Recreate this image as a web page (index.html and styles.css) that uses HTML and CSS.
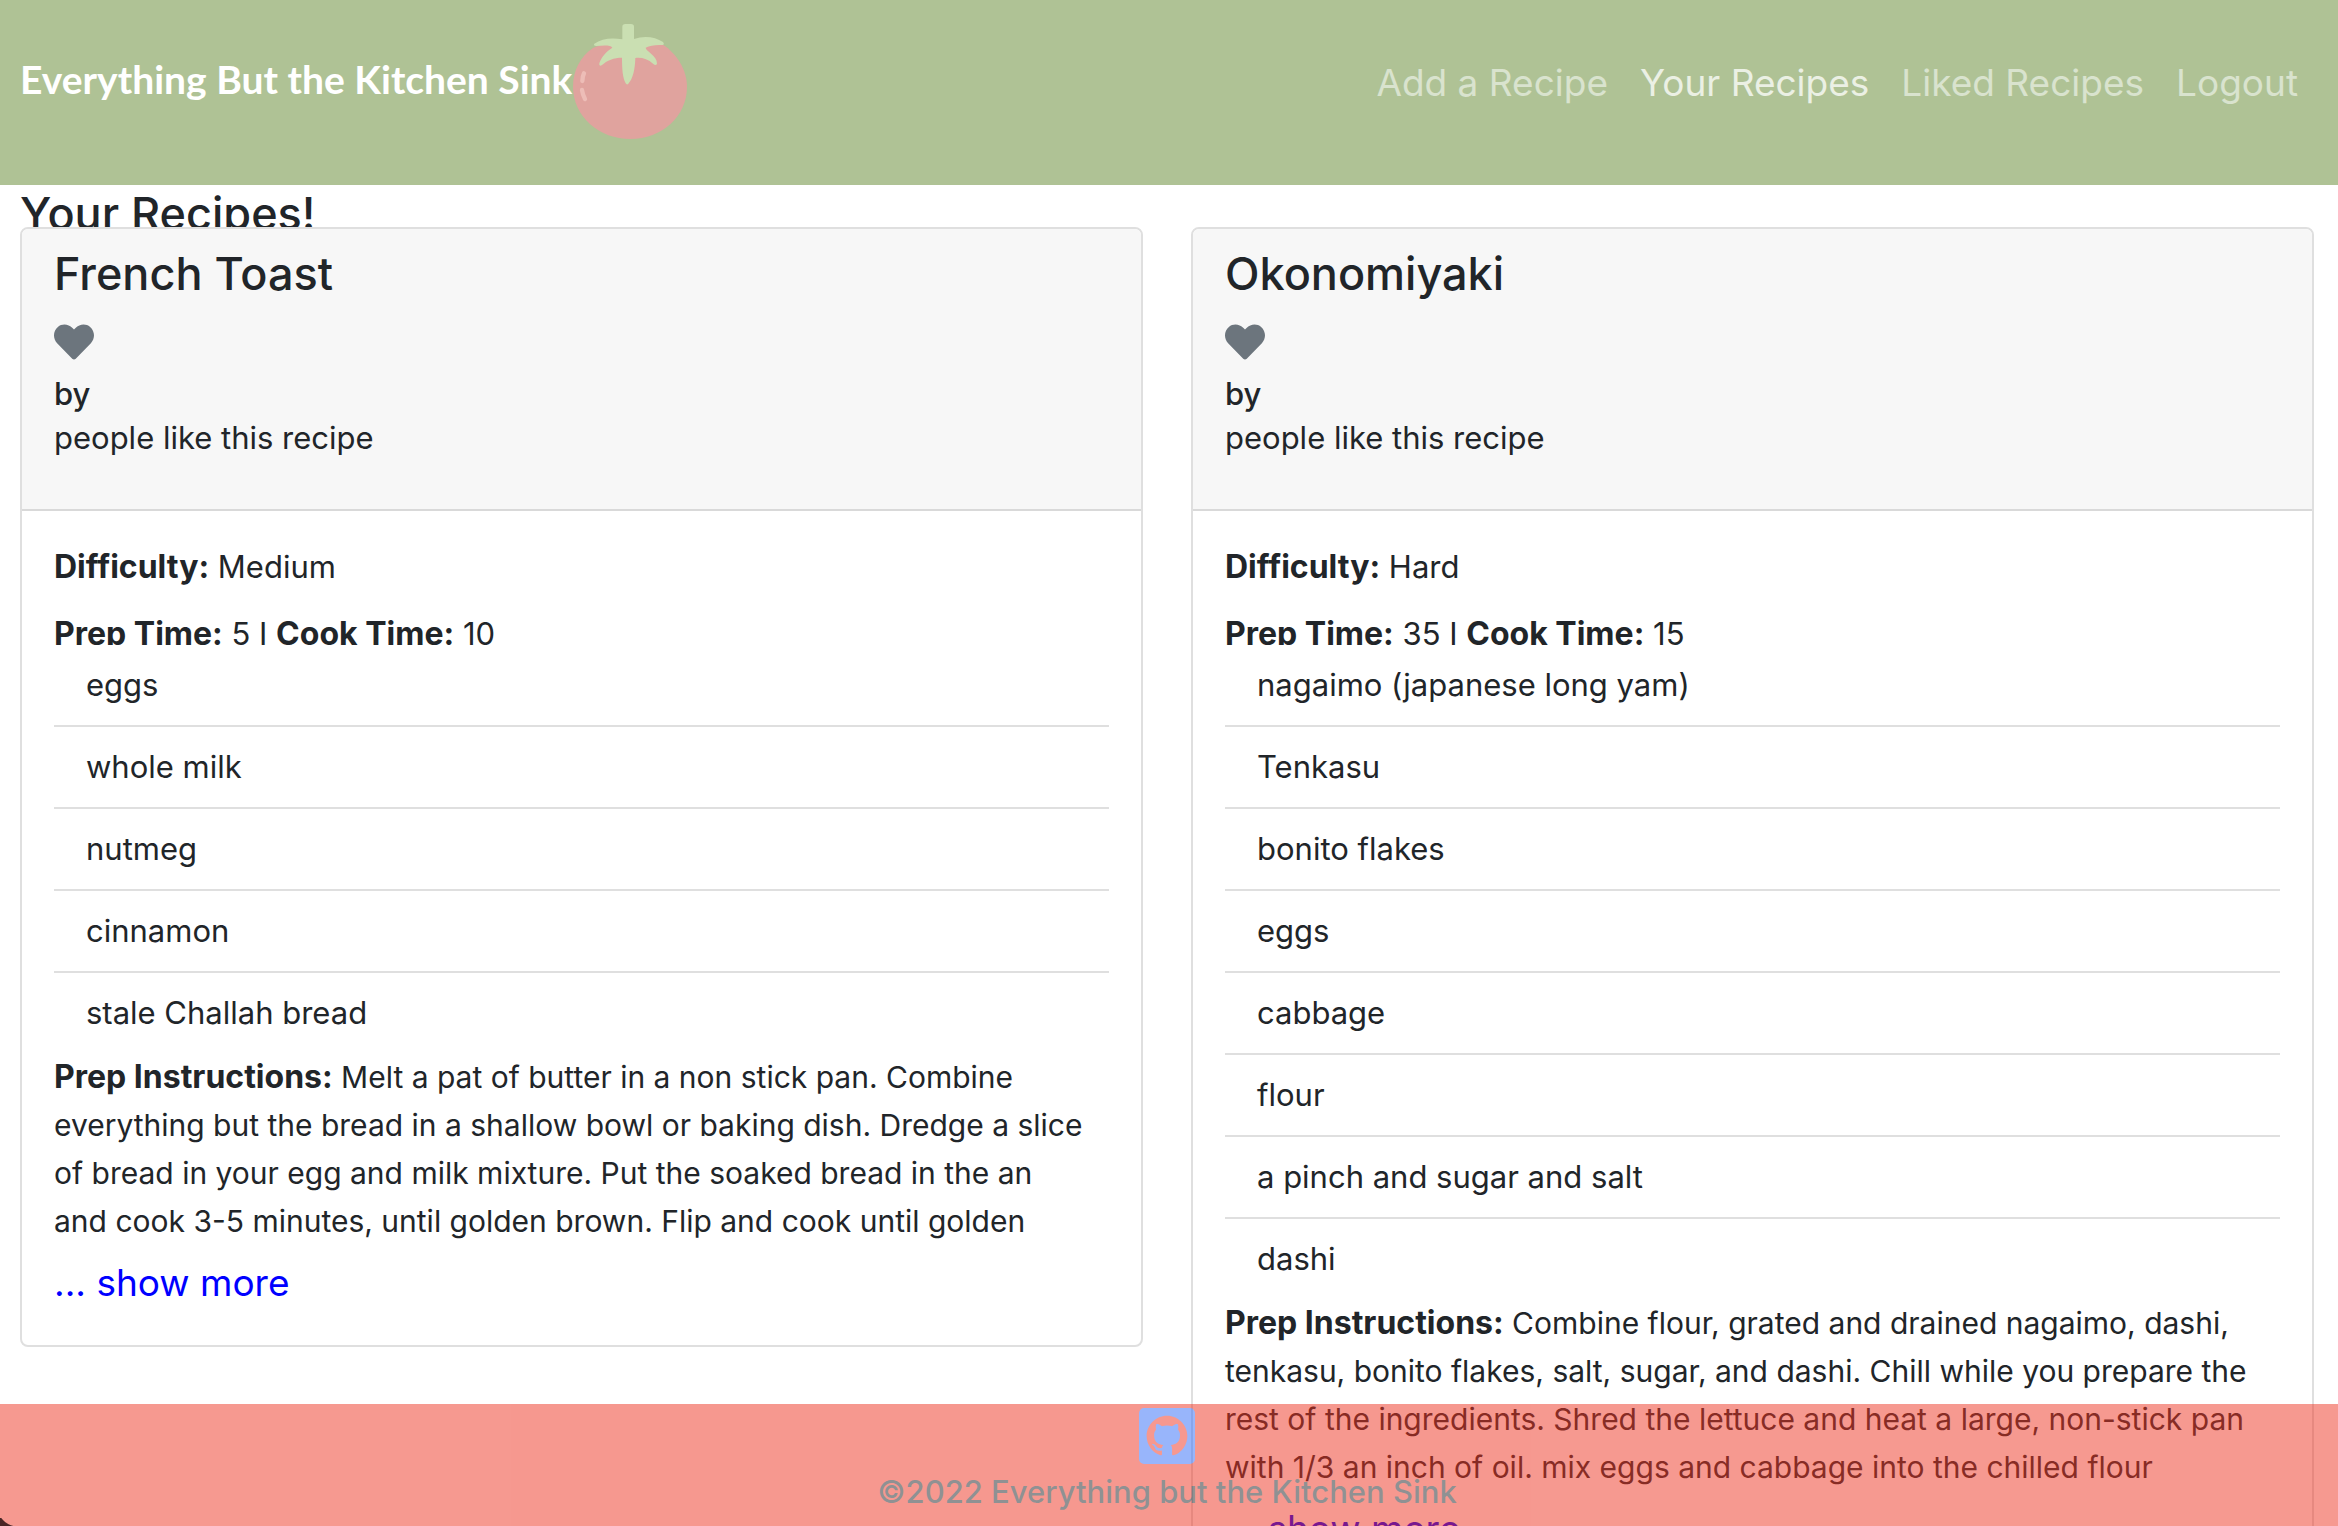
FILE: index.html
```html
<!DOCTYPE html>
<html lang="en">
<head>
<meta charset="utf-8">
<meta name="viewport" content="width=device-width, initial-scale=1">
<title>Everything But the Kitchen Sink</title>
<link rel="stylesheet" href="styles.css">
</head>
<body>
<header class="navbar">
  <a class="brand" href="#">
    <span class="brand-name">Everything But the Kitchen Sink</span>
    <svg class="tomato" viewBox="42 39 348 351" aria-hidden="true">
      <path fill="#e0a39e" d="M105 114C66 140 45 183 45 230C45 320 125 387 217 387C312 387 387 318 387 230C387 180 356 130 315 104C270 88 150 92 105 114Z"/>
      <path fill="#cadfb2" d="M193 50Q193 42 202 42H219Q228 42 228 50V87C258 76 292 80 315 96Q321 104 313 105C292 104 276 106 263 113C262 123 298 136 297 161Q294 168 286 162C269 147 252 142 232 144C231 178 225 206 211 221Q207 226 203 220C194 202 192 178 192 143C168 143 147 151 131 166Q122 170 124 160C130 140 146 124 163 113C160 105 137 105 115 108Q105 107 109 101C130 86 160 82 193 88Z"/>
      <path fill="none" stroke="#edbdb7" stroke-width="13" stroke-linecap="round" d="M78 190Q73 200 73 213M72 240Q74 254 81 267"/>
    </svg>
  </a>
  <nav class="nav-links">
    <a href="#">Add a Recipe</a>
    <a class="active" href="#">Your Recipes</a>
    <a href="#">Liked Recipes</a>
    <a href="#">Logout</a>
  </nav>
</header>

<main class="page">
  <h1>Your Recipes!</h1>
  <div class="recipes">
    <article class="card">
      <div class="card-header">
        <h2>French Toast</h2>
        <button class="like" type="button" aria-label="Like French Toast">
          <svg viewBox="0 0 512 512"><path d="M462.3 62.6C407.5 15.9 326 24.3 275.7 76.2L256 96.5l-19.7-20.3C186.1 24.3 104.5 15.9 49.7 62.6c-62.8 53.6-66.1 149.8-9.9 207.9l193.5 199.8c12.5 12.9 32.8 12.9 45.3 0l193.5-199.8c56.3-58.1 53-154.3-9.8-207.9z"/></svg>
        </button>
        <h3>by</h3>
        <p>people like this recipe</p>
      </div>
      <div class="card-body">
        <p class="fact"><strong>Difficulty:</strong> Medium</p>
        <p class="fact"><strong>Prep Time:</strong> 5 I <strong>Cook Time:</strong> 10</p>
        <ul class="ingredients">
          <li>eggs</li>
          <li>whole milk</li>
          <li>nutmeg</li>
          <li>cinnamon</li>
          <li>stale Challah bread</li>
        </ul>
        <p class="instructions"><strong>Prep Instructions:</strong> Melt a pat of butter in a non stick pan. Combine<br>everything but the bread in a shallow bowl or baking dish. Dredge a slice<br>of bread in your egg and milk mixture. Put the soaked bread in the an<br>and cook 3-5 minutes, until golden brown. Flip and cook until golden</p>
        <a class="more" href="#">... show more</a>
      </div>
    </article>

    <article class="card">
      <div class="card-header">
        <h2>Okonomiyaki</h2>
        <button class="like" type="button" aria-label="Like Okonomiyaki">
          <svg viewBox="0 0 512 512"><path d="M462.3 62.6C407.5 15.9 326 24.3 275.7 76.2L256 96.5l-19.7-20.3C186.1 24.3 104.5 15.9 49.7 62.6c-62.8 53.6-66.1 149.8-9.9 207.9l193.5 199.8c12.5 12.9 32.8 12.9 45.3 0l193.5-199.8c56.3-58.1 53-154.3-9.8-207.9z"/></svg>
        </button>
        <h3>by</h3>
        <p>people like this recipe</p>
      </div>
      <div class="card-body">
        <p class="fact"><strong>Difficulty:</strong> Hard</p>
        <p class="fact"><strong>Prep Time:</strong> 35 I <strong>Cook Time:</strong> 15</p>
        <ul class="ingredients">
          <li>nagaimo (japanese long yam)</li>
          <li>Tenkasu</li>
          <li>bonito flakes</li>
          <li>eggs</li>
          <li>cabbage</li>
          <li>flour</li>
          <li>a pinch and sugar and salt</li>
          <li>dashi</li>
        </ul>
        <p class="instructions"><strong>Prep Instructions:</strong> Combine flour, grated and drained nagaimo, dashi,<br>tenkasu, bonito flakes, salt, sugar, and dashi. Chill while you prepare the<br>rest of the ingredients. Shred the lettuce and heat a large, non-stick pan<br>with 1/3 an inch of oil. mix eggs and cabbage into the chilled flour</p>
        <a class="more" href="#">... show more</a>
      </div>
    </article>
  </div>
</main>

<footer class="footer">
  <a href="#" aria-label="GitHub">
    <svg class="github" viewBox="-3 -3 22 22"><path fill-rule="evenodd" d="M-1-3H17A2 2 0 0 1 19-1V17A2 2 0 0 1 17 19H-1A2 2 0 0 1-3 17V-1A2 2 0 0 1-1-3ZM8 0C3.58 0 0 3.58 0 8c0 3.54 2.29 6.53 5.47 7.59.4.07.55-.17.55-.38 0-.19-.01-.82-.01-1.49-2.01.37-2.53-.49-2.69-.94-.09-.23-.48-.94-.82-1.13-.28-.15-.68-.52-.01-.53.63-.01 1.08.58 1.23.82.72 1.21 1.87.87 2.33.66.07-.52.28-.87.51-1.07-1.78-.2-3.64-.89-3.64-3.95 0-.87.31-1.59.82-2.15-.08-.2-.36-1.02.08-2.12 0 0 .67-.21 2.2.82.64-.18 1.32-.27 2-.27s1.36.09 2 .27c1.53-1.04 2.2-.82 2.2-.82.44 1.1.16 1.92.08 2.12.51.56.82 1.27.82 2.15 0 3.07-1.87 3.75-3.65 3.95.29.25.54.73.54 1.48 0 1.07-.01 1.93-.01 2.2 0 .21.15.46.55.38A8.01 8.01 0 0 0 16 8c0-4.42-3.58-8-8-8Z"/></svg>
  </a>
  <p>©2022 Everything but the Kitchen Sink</p>
</footer>
<div class="window-corner"></div>
</body>
</html>
```

FILE: styles.css
```css
* {
  box-sizing: border-box;
  margin: 0;
}

body {
  background: #fff;
  color: #212529;
  font-family: Inter, "Liberation Sans", sans-serif;
  font-size: 31px;
  line-height: 48px;
}

a {
  text-decoration: none;
}

strong {
  font-size: 32px;
  line-height: 1;
}

/* Top bar */
.navbar {
  display: flex;
  justify-content: space-between;
  align-items: center;
  padding: 23px 40px 45px 20px;
  background: #afc295;
}

.brand {
  display: flex;
  align-items: center;
  color: #fff;
  font-family: Lato, sans-serif;
  font-size: 39px;
  font-weight: 700;
}

.brand-name {
  padding-bottom: 6px;
}

.tomato {
  width: 116px;
  height: 117px;
}

.nav-links {
  display: flex;
  gap: 32px;
  padding-top: 2px;
  font-size: 37px;
}

.nav-links a {
  color: #d9e3ce;
}

.nav-links .active {
  color: #ebf0e4;
}

/* Recipe cards */
.page {
  padding: 0 24px 0 20px;
}

h1,
h2 {
  font-size: 45px;
  font-weight: 500;
  line-height: 58px;
}

.recipes {
  position: relative;
  display: grid;
  grid-template-columns: 1fr 1fr;
  align-items: start;
  gap: 48px;
  margin-top: -16px;
}

.card {
  border: 2px solid #dfdfdf;
  border-radius: 8px;
  background: #fff;
}

.card-header {
  padding: 16px 32px 49px;
  border-bottom: 2px solid #d9d9d9;
  border-radius: 6px 6px 0 0;
  background: #f7f7f7;
  line-height: 44px;
}

.like {
  display: block;
  margin: 19px 0 10px;
  padding: 0;
  border: 0;
  background: none;
}

.like svg {
  display: block;
  width: 40px;
  height: 40px;
  fill: #6c757d;
}

h3 {
  font-size: 31px;
  font-weight: 500;
}

.card-body {
  padding: 32px;
}

.fact + .fact {
  margin-top: 19px;
}

.ingredients {
  position: relative;
  margin-top: -13px;
  padding: 0;
  background: #fff;
  list-style: none;
}

.ingredients li {
  padding: 16px 32px;
}

.ingredients li:not(:last-child) {
  border-bottom: 2px solid #dfdfdf;
}

.instructions {
  font-size: 30px;
}

.more {
  display: block;
  margin-top: 8px;
  color: #00f;
  font-size: 37px;
  line-height: 60px;
}

/* Translucent bar pinned to the bottom of the window */
.footer {
  position: fixed;
  right: 0;
  bottom: 0;
  left: 0;
  display: flex;
  flex-direction: column;
  align-items: center;
  padding: 4px 4px 10px 0;
  background: #ed3321;
  font-weight: 500;
  opacity: 0.5;
}

.github {
  display: block;
  width: 56px;
  height: 56px;
  fill: #336df7;
}

.footer p {
  margin-top: 4px;
}

.window-corner {
  position: fixed;
  bottom: 0;
  left: 0;
  width: 16px;
  height: 8px;
  background: radial-gradient(circle at 18px -12px, transparent 20px, #4a2626 21px);
}
```
